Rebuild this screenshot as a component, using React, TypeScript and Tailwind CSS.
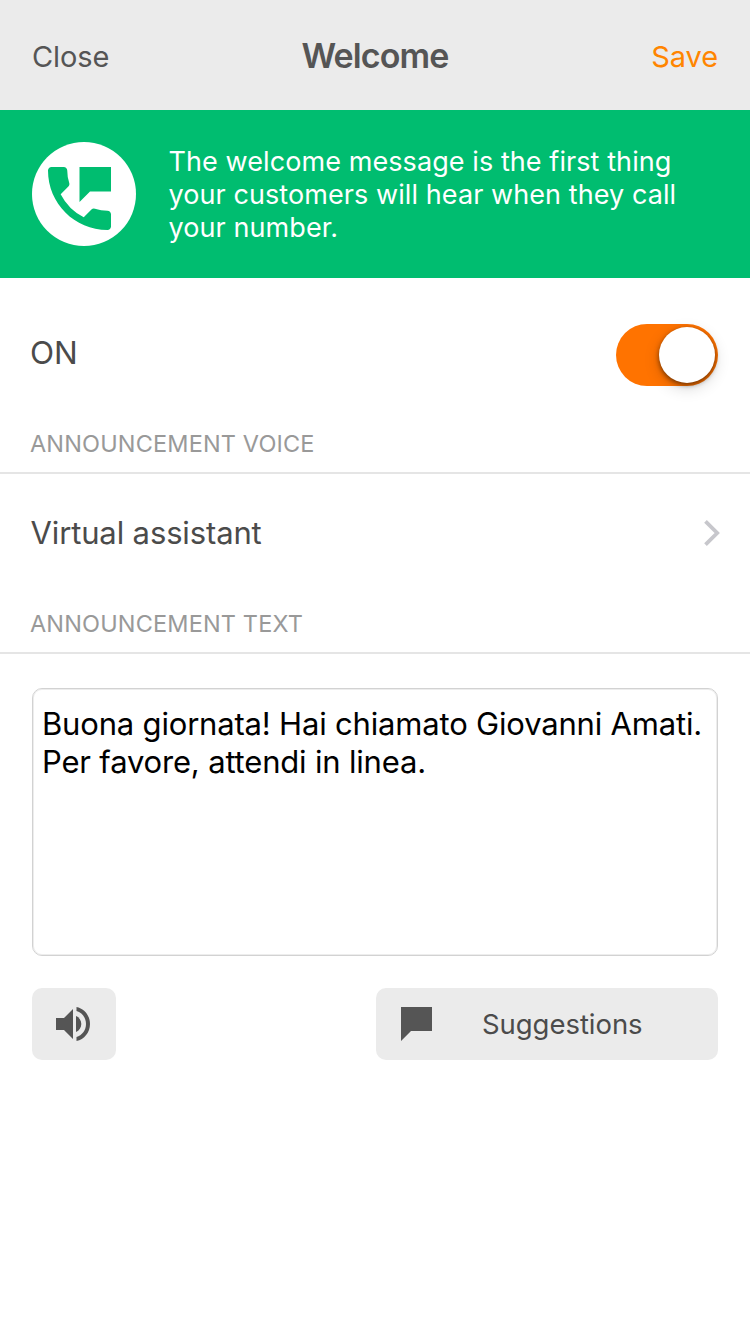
function PhoneMessageIcon() {
  return (
    <svg viewBox="0 0 104 104" className="block size-[104px]">
      <circle cx="52" cy="52" r="52" fill="#fff" />
      <path
        transform="translate(5.5 14.5) scale(3.5)"
        fill="#00bd70"
        d="M20 15.5c-1.25 0-2.45-.2-3.57-.57a1.02 1.02 0 0 0-1.02.24l-2.2 2.2a15.045 15.045 0 0 1-6.59-6.58l2.2-2.21c.28-.27.36-.66.25-1.01A11.36 11.36 0 0 1 8.5 4c0-.55-.45-1-1-1H4c-.55 0-1 .45-1 1 0 9.39 7.61 17 17 17 .55 0 1-.45 1-1v-3.5c0-.55-.45-1-1-1zM12 3v10l3-3h6V3h-9z"
      />
    </svg>
  );
}

function SpeakerIcon() {
  return (
    <svg viewBox="0 0 34 34" className="block h-[34px] w-[34px]" fill="#555">
      <path d="M0 11h8L17 2v30l-9-9H0z" />
      <path d="M20 9c3.200 1.400 5.300 4.500 5.300 8s-2.100 6.600-5.300 8z" />
      <path d="M20.500 0c7.700 1.500 13.500 8.600 13.500 17s-5.800 15.500-13.500 17v-4c5.500-1.500 9.500-6.800 9.500-13s-4-11.500-9.500-13z" />
    </svg>
  );
}

function SectionHeader({ children }: { children: string }) {
  return (
    <h2 className="flex h-[60px] items-center border-b-2 border-[#e5e5e5] pt-0.5 pl-[30px] text-[23.5px] leading-[30px] tracking-[0.15px] text-[#999]">
      {children}
    </h2>
  );
}

export default function App() {
  return (
    <main className="flex min-h-[1334px] w-[750px] flex-col bg-white font-['Inter',sans-serif] text-[#4b4b4b]">
      <header className="grid h-[110px] grid-cols-3 items-center bg-[#ebebeb] px-8 text-[29px] text-[#555]">
        <button className="justify-self-start pt-1 tracking-[-0.1px]">Close</button>
        <h1 className="justify-self-center text-[34px] font-semibold tracking-[-0.9px]">Welcome</h1>
        <button className="justify-self-end pt-1 tracking-[-0.1px] text-[#ff8500]">Save</button>
      </header>

      <section className="flex h-[168px] items-center bg-[#00bd70] pl-8 text-white">
        <PhoneMessageIcon />
        <p className="ml-[32.5px] text-[27px] leading-[33px] tracking-[0.08px]">
          <span className="block whitespace-nowrap">The welcome message is the first thing</span>
          <span className="block whitespace-nowrap">your customers will hear when they call</span>
          <span className="block whitespace-nowrap">your number.</span>
        </p>
      </section>

      <section className="flex h-[136px] items-center justify-between pt-[18px] pr-8 pl-[30px]">
        <span className="-mt-[5px] text-[31.5px]">ON</span>
        <button className="flex h-[62px] w-[102px] items-center justify-end rounded-full bg-[#ff7300] pr-[3px]">
          <span className="size-14 rounded-full bg-white shadow-[0_5px_16px_rgba(0,0,0,0.16),0_2px_5px_rgba(0,0,0,0.5)]" />
        </button>
      </section>

      <SectionHeader>ANNOUNCEMENT VOICE</SectionHeader>
      <button className="flex h-[120px] items-center justify-between pr-[30px] pb-0.5 pl-[30.5px] text-left">
        <span className="text-[31px] tracking-[-0.13px]">Virtual assistant</span>
        <svg viewBox="0 0 16 26" className="h-[26px] w-4" fill="none" stroke="#c7c7cc" strokeWidth="3.800">
          <path d="M1.500 1.400 13.200 13l-11.700 11.600" />
        </svg>
      </button>
      <SectionHeader>ANNOUNCEMENT TEXT</SectionHeader>

      <section className="px-8 pt-[34px]">
        <div className="h-[268px] rounded-[10px] border border-[#d2d2d2] px-[9px] pt-4 text-[31px] leading-[38px] tracking-[-0.18px] text-black shadow-[inset_0_0_0_1px_#ededed]">
          <p className="whitespace-nowrap">Buona giornata! Hai chiamato Giovanni Amati.</p>
          <p className="whitespace-nowrap">Per favore, attendi in linea.</p>
        </div>
        <div className="mt-8 flex justify-between">
          <button className="flex h-[72px] w-[84px] items-center justify-center rounded-[10px] bg-[#ebebeb] pr-0.5">
            <SpeakerIcon />
          </button>
          <button className="flex h-[72px] w-[342px] items-center rounded-[10px] bg-[#ebebeb] pl-[25px]">
            <svg viewBox="0 0 31 34" className="h-[34px] w-[31px]" fill="#555">
              <path d="M0 0h31v24H10L0 34z" />
            </svg>
            <span className="ml-[50px] pt-0.5 text-[27.5px] tracking-[-0.05px]">Suggestions</span>
          </button>
        </div>
      </section>
    </main>
  );
}
